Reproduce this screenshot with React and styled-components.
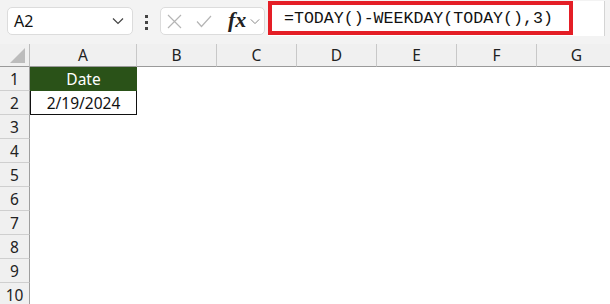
import { Fragment } from "react";
import styled, { createGlobalStyle } from "styled-components";

const GlobalStyle = createGlobalStyle`
  body {
    margin: 0;
    background: #ffffff;
    font-family: "Noto Sans", "Open Sans", Arial, sans-serif;
    overflow: hidden;
  }
`;

const Page = styled.div`
  width: 610px;
  height: 304px;
  overflow: hidden;
  background: #ffffff;
`;

const Toolbar = styled.div`
  height: 44px;
  background: #f3f3f3;
  display: flex;
  align-items: flex-start;
  padding-left: 7px;
  box-sizing: border-box;
`;

const NameBox = styled.div`
  width: 126px;
  height: 28px;
  margin-top: 7px;
  box-sizing: border-box;
  background: #fff;
  border: 1px solid #dcdcdc;
  border-radius: 5px;
  display: flex;
  align-items: center;
  justify-content: space-between;
  padding: 0 8px 0 6px;
  font-size: 16px;
  color: #111;
`;

const Dots = styled.div`
  width: 27px;
  height: 44px;
  display: flex;
  flex-direction: column;
  align-items: center;
  justify-content: center;
  gap: 3px;
  span {
    width: 3px;
    height: 3px;
    background: #444;
  }
`;

const FxBox = styled.div`
  width: 105px;
  height: 28px;
  margin-top: 7px;
  box-sizing: border-box;
  background: #fff;
  border: 1px solid #dcdcdc;
  border-radius: 5px;
  display: flex;
  align-items: center;
  padding-left: 6px;
  gap: 14px;
`;

const FxGroup = styled.div`
  display: flex;
  align-items: center;
  gap: 4px;
  margin-left: 2px;
`;

const Fx = styled.span`
  font-family: "Liberation Serif", "DejaVu Serif", serif;
  font-style: italic;
  font-weight: 600;
  font-size: 22px;
  color: #222;
  line-height: 1;
  margin-top: -3px;
`;

const FormulaBar = styled.div`
  margin-left: 3px;
  margin-top: 1px;
  width: 337px;
  height: 35px;
  background: #fff;
  border-right: 1px solid #d4d4d4;
  box-sizing: border-box;
  display: flex;
`;

const Highlight = styled.div`
  width: 305px;
  height: 34px;
  box-sizing: border-box;
  border: 4px solid #e41e26;
  display: flex;
  align-items: center;
  padding-left: 12px;
  font-family: "Liberation Mono", "DejaVu Sans Mono", monospace;
  font-size: 16.6px;
  color: #111;
  white-space: nowrap;
`;

const Sheet = styled.div`
  display: grid;
  grid-template-columns: 30px 107px repeat(6, 80px);
  grid-template-rows: 23px;
  grid-auto-rows: 24px;
`;

const ColHead = styled.div`
  background: #f0f0f0;
  border-right: 1px solid #c8c8c8;
  border-bottom: 1px solid #9a9a9a;
  box-sizing: border-box;
  display: flex;
  align-items: center;
  justify-content: center;
  font-size: 15.5px;
  color: #222;
  position: relative;
`;

const Corner = styled(ColHead)`
  border-right: 1px solid #bdbdbd;
  svg {
    position: absolute;
    right: 4px;
    bottom: 3px;
  }
`;

const RowHead = styled.div`
  background: #f0f0f0;
  border-right: 1px solid #9e9e9e;
  border-bottom: 1px solid #cfcfcf;
  box-sizing: border-box;
  display: flex;
  align-items: center;
  justify-content: center;
  font-size: 15.5px;
  color: #222;
`;

const Cell = styled.div`
  box-sizing: border-box;
  display: flex;
  align-items: center;
  justify-content: center;
  font-size: 15.5px;
  background: ${(p) => (p.$head ? "#2a5218" : "#fff")};
  color: ${(p) => (p.$head ? "#fff" : "#111")};
  border: ${(p) => (p.$boxed ? "1px solid #111" : "none")};
  border-top: ${(p) => (p.$boxed ? "none" : undefined)};
`;

const Chevron = ({ size = 12, color = "#444" }) => (
  <svg width={size} height={size / 2 + 2} viewBox="0 0 12 8">
    <path d="M1 1.5 L6 6.5 L11 1.5" fill="none" stroke={color} strokeWidth="1.2" />
  </svg>
);

const cols = ["A", "B", "C", "D", "E", "F", "G"];
const rows = [1, 2, 3, 4, 5, 6, 7, 8, 9, 10];

const cellContent = (r, c) => {
  if (c === "A" && r === 1) return <Cell key={c + r} $head>Date</Cell>;
  if (c === "A" && r === 2) return <Cell key={c + r} $boxed>2/19/2024</Cell>;
  return <Cell key={c + r} />;
};

export default function App() {
  return (
    <Page>
      <GlobalStyle />
      <Toolbar>
        <NameBox>
          <span>A2</span>
          <Chevron />
        </NameBox>
        <Dots>
          <span />
          <span />
          <span />
        </Dots>
        <FxBox>
          <svg width="15" height="15" viewBox="0 0 15 15">
            <path d="M1 1 L14 14 M14 1 L1 14" stroke="#b5b5b5" strokeWidth="1.2" />
          </svg>
          <svg width="16" height="13" viewBox="0 0 16 13">
            <path d="M1 6.5 L5.5 11.5 L15 1" fill="none" stroke="#b5b5b5" strokeWidth="1.2" />
          </svg>
          <FxGroup>
            <Fx>fx</Fx>
            <Chevron size={10} color="#888" />
          </FxGroup>
        </FxBox>
        <FormulaBar>
          <Highlight>=TODAY()-WEEKDAY(TODAY(),3)</Highlight>
        </FormulaBar>
      </Toolbar>
      <Sheet>
        <Corner>
          <svg width="15" height="15" viewBox="0 0 15 15">
            <path d="M15 0 L15 15 L0 15 Z" fill="#bcbcbc" />
          </svg>
        </Corner>
        {cols.map((c) => (
          <ColHead key={c}>{c}</ColHead>
        ))}
        {rows.map((r) => (
          <Fragment key={r}>
            <RowHead>{r}</RowHead>
            {cols.map((c) => cellContent(r, c))}
          </Fragment>
        ))}
      </Sheet>
    </Page>
  );
}
